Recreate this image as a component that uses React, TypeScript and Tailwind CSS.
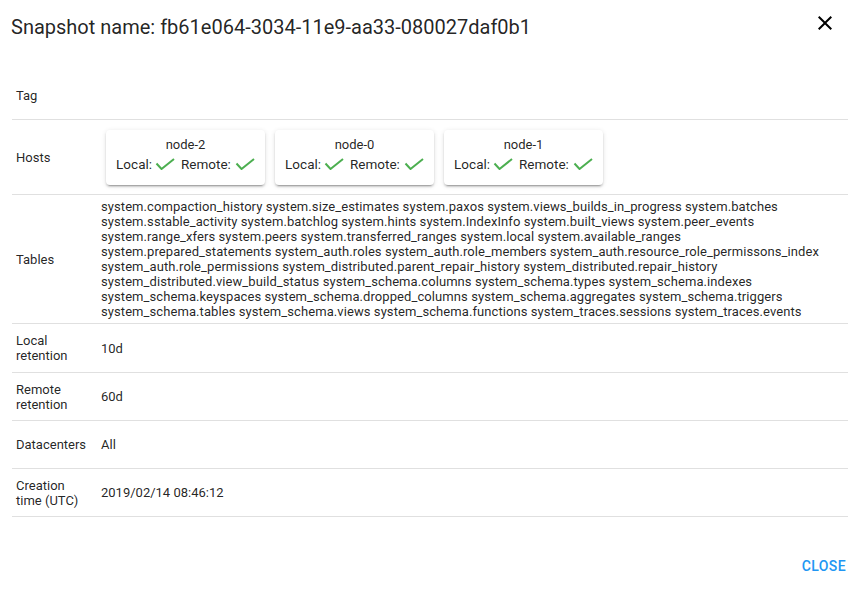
import React from "react";

const tables = [
  "system.compaction_history",
  "system.size_estimates",
  "system.paxos",
  "system.views_builds_in_progress",
  "system.batches",
  "system.sstable_activity",
  "system.batchlog",
  "system.hints",
  "system.IndexInfo",
  "system.built_views",
  "system.peer_events",
  "system.range_xfers",
  "system.peers",
  "system.transferred_ranges",
  "system.local",
  "system.available_ranges",
  "system.prepared_statements",
  "system_auth.roles",
  "system_auth.role_members",
  "system_auth.resource_role_permissons_index",
  "system_auth.role_permissions",
  "system_distributed.parent_repair_history",
  "system_distributed.repair_history",
  "system_distributed.view_build_status",
  "system_schema.columns",
  "system_schema.types",
  "system_schema.indexes",
  "system_schema.keyspaces",
  "system_schema.dropped_columns",
  "system_schema.aggregates",
  "system_schema.triggers",
  "system_schema.tables",
  "system_schema.views",
  "system_schema.functions",
  "system_traces.sessions",
  "system_traces.events",
];

function Check() {
  return (
    <svg width="20" height="12" viewBox="0 0 20 12" className="shrink-0">
      <polyline
        points="1.5,5.5 6.5,11 19,1"
        fill="none"
        stroke="#4caf50"
        strokeWidth="2"
      />
    </svg>
  );
}

function HostCard({ name }: { name: string }) {
  return (
    <div className="m-[5px] h-[55px] w-[159px] rounded bg-white px-[11px] pt-[6px] shadow-[0px_3px_1px_-2px_rgba(0,0,0,0.2),0px_2px_2px_0px_rgba(0,0,0,0.14),0px_1px_5px_0px_rgba(0,0,0,0.12)]">
      <div className="text-center text-[13px] leading-[18px]">{name}</div>
      <div className="flex items-center justify-center text-[13.5px] leading-[20px]">
        <span>Local:</span>
        <span className="ml-[3px] mt-[1px]">
          <Check />
        </span>
        <span className="ml-[6px]">Remote:</span>
        <span className="ml-[4px] mt-[1px]">
          <Check />
        </span>
      </div>
    </div>
  );
}

function Row({
  label,
  children,
  className = "min-h-[48px]",
}: {
  label: React.ReactNode;
  children?: React.ReactNode;
  className?: string;
}) {
  return (
    <div className={"flex items-stretch border-b border-[#e0e0e0] " + className}>
      <div className="flex w-[85px] shrink-0 items-center px-[4px] text-[13px] leading-[15px]">
        {label}
      </div>
      <div className="flex flex-1 items-center px-[4px] text-[13px] leading-[15px]">
        {children}
      </div>
    </div>
  );
}

export default function App() {
  return (
    <div
      className="flex h-[590px] w-[863px] flex-col bg-white text-[rgba(0,0,0,0.87)]"
      style={{ fontFamily: "Roboto, 'Liberation Sans', sans-serif" }}
    >
      <div className="relative h-[72px] shrink-0 pl-[11px] pt-[11px]">
        <div className="text-[20px] leading-[32px]">
          Snapshot name: fb61e064-3034-11e9-aa33-080027daf0b1
        </div>
        <button className="absolute right-[26px] top-[11px] flex h-6 w-6 items-center justify-center">
          <svg width="24" height="24" viewBox="0 0 24 24">
            <path
              d="M19 6.41L17.59 5 12 10.59 6.41 5 5 6.41 10.59 12 5 17.59 6.41 19 12 13.41 17.59 19 19 17.59 13.41 12z"
              fill="#000"
            />
          </svg>
        </button>
      </div>
      <div className="pl-[12px] pr-[15px]">
        <Row label="Tag" />
        <Row label="Hosts" className="min-h-[75px]">
          <div className="flex">
            <HostCard name="node-2" />
            <HostCard name="node-0" />
            <HostCard name="node-1" />
          </div>
        </Row>
        <Row label="Tables">
          <div className="py-[4px] pr-[16px] tracking-[0.08px]">{tables.join(" ")}</div>
        </Row>
        <Row label="Local retention" className="min-h-[49px]">10d</Row>
        <Row label="Remote retention">60d</Row>
        <Row label="Datacenters">All</Row>
        <Row label="Creation time (UTC)">2019/02/14 08:46:12</Row>
      </div>
      <div className="mt-auto flex justify-end pb-[6px] pr-[9px]">
        <button className="h-9 rounded px-2 text-[14px] font-medium uppercase tracking-[0.4px] text-[#2196f3]">
          Close
        </button>
      </div>
    </div>
  );
}
